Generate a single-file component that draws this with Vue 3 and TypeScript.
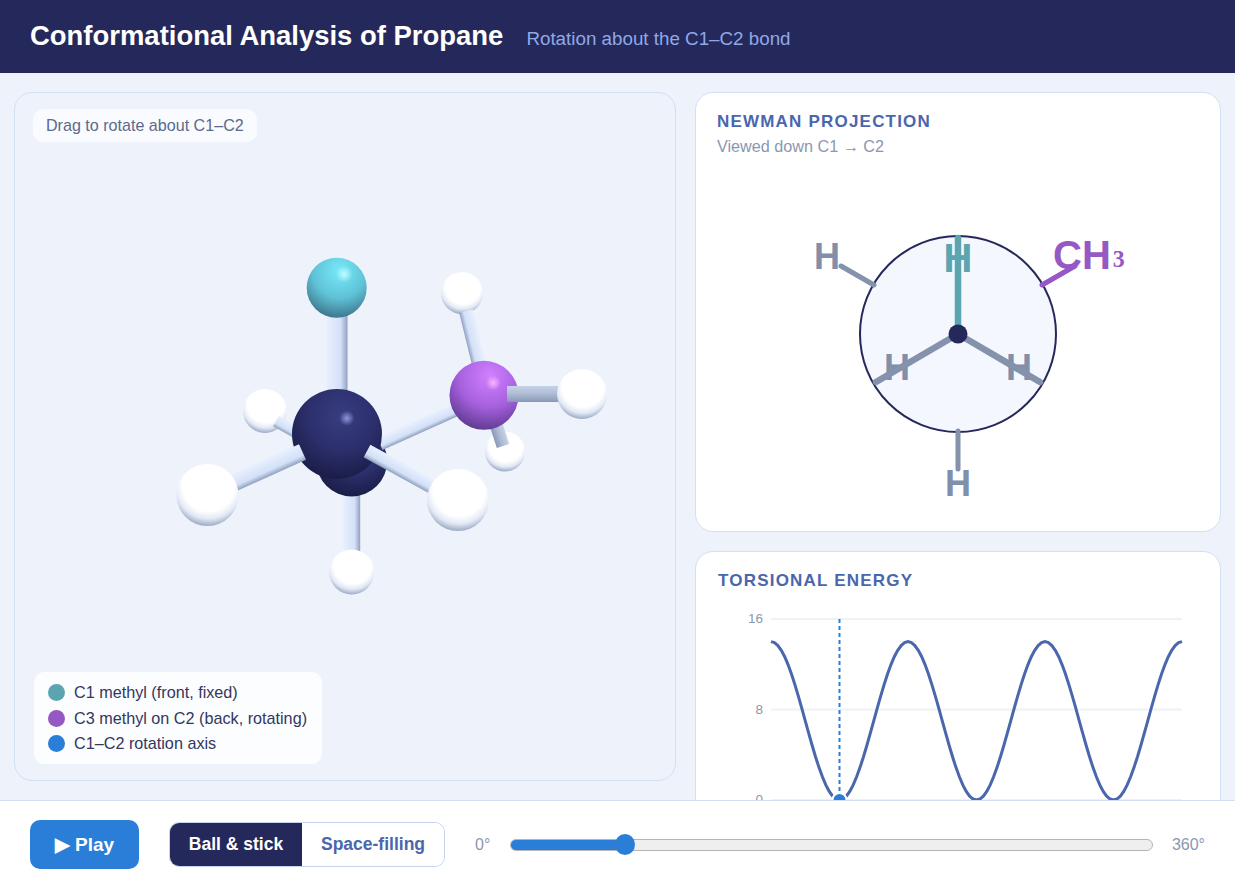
<script setup lang="ts">
import { computed, ref } from 'vue'

type Pt = [number, number]
interface Bond { a: Pt; b: Pt; w: number; id: string; dark?: boolean }
interface Atom { x: number; y: number; r: number; kind: 'h' | 'navy' | 'cyan' | 'purple' }

type Item = { t: 'b'; d: Bond } | { t: 'a'; d: Atom }

const scene: Item[] = [
  { t: 'a', d: { x: 462, y: 293, r: 21, kind: 'h' } },
  { t: 'b', d: { a: [466, 311], b: [480, 368], w: 14, id: 'b1' } },
  { t: 'a', d: { x: 505, y: 451.5, r: 20, kind: 'h' } },
  { t: 'b', d: { a: [494, 418], b: [503, 446], w: 13, id: 'b2', dark: true } },
  { t: 'a', d: { x: 265, y: 411, r: 22, kind: 'h' } },
  { t: 'b', d: { a: [276, 421], b: [310, 440], w: 12, id: 'b3' } },
  { t: 'b', d: { a: [351.7, 480], b: [351.7, 556], w: 17, id: 'b4' } },
  { t: 'a', d: { x: 351.7, y: 572, r: 22.5, kind: 'h' } },
  { t: 'a', d: { x: 351.7, y: 461, r: 35.5, kind: 'navy' } },
  { t: 'b', d: { a: [380, 444], b: [470, 403.5], w: 13, id: 'b5' } },
  { t: 'a', d: { x: 484, y: 395.3, r: 34.5, kind: 'purple' } },
  { t: 'b', d: { a: [507, 394], b: [565, 394], w: 16, id: 'b6', dark: true } },
  { t: 'a', d: { x: 582, y: 394, r: 25, kind: 'h' } },
  { t: 'b', d: { a: [337, 290], b: [337, 420], w: 21, id: 'b7' } },
  { t: 'a', d: { x: 336.7, y: 287.7, r: 30, kind: 'cyan' } },
  { t: 'a', d: { x: 337, y: 434, r: 45, kind: 'navy' } },
  { t: 'b', d: { a: [302.5, 452], b: [225, 487], w: 17, id: 'b8' } },
  { t: 'a', d: { x: 207.5, y: 495, r: 31, kind: 'h' } },
  { t: 'b', d: { a: [367, 451], b: [436, 489], w: 14, id: 'b9' } },
  { t: 'a', d: { x: 458, y: 500, r: 31, kind: 'h' } },
]

function quad(b: Bond): string {
  const dx = b.b[0] - b.a[0]
  const dy = b.b[1] - b.a[1]
  const l = Math.hypot(dx, dy)
  const nx = (-dy / l) * (b.w / 2)
  const ny = (dx / l) * (b.w / 2)
  return [
    [b.a[0] + nx, b.a[1] + ny],
    [b.b[0] + nx, b.b[1] + ny],
    [b.b[0] - nx, b.b[1] - ny],
    [b.a[0] - nx, b.a[1] - ny],
  ].map((p) => p.join(',')).join(' ')
}

function gradEnds(b: Bond) {
  const dx = b.b[0] - b.a[0]
  const dy = b.b[1] - b.a[1]
  const l = Math.hypot(dx, dy)
  let nx = (-dy / l) * (b.w / 2)
  let ny = (dx / l) * (b.w / 2)
  if (ny > 0 || (ny === 0 && nx > 0)) { nx = -nx; ny = -ny }
  return { x1: b.a[0] + nx, y1: b.a[1] + ny, x2: b.a[0] - nx, y2: b.a[1] - ny }
}

const hl: Record<Atom['kind'], { dx: number; dy: number; r: number }> = {
  h: { dx: 0.25, dy: -0.55, r: 0.4 },
  navy: { dx: 0.22, dy: -0.35, r: 0.17 },
  cyan: { dx: 0.25, dy: -0.45, r: 0.28 },
  purple: { dx: 0.27, dy: -0.36, r: 0.22 },
}

const deg = ref(60)
const W = 411
const H = 181
const curve = computed(() => {
  const pts: string[] = []
  for (let a = 0; a <= 360; a += 3) {
    const e = 7 * (1 + Math.cos((3 * a * Math.PI) / 180))
    pts.push(`${((a / 360) * W).toFixed(2)},${(H - (e / 16) * H).toFixed(2)}`)
  }
  return pts.join(' ')
})
const markerX = computed(() => (deg.value / 360) * W)
const markerE = computed(() => 7 * (1 + Math.cos((3 * deg.value * Math.PI) / 180)))
const markerY = computed(() => H - (markerE.value / 16) * H)
const fillPct = computed(() => `${(deg.value / 360) * 100}%`)
</script>

<template>
  <div class="app">
    <header class="top">
      <h1>Conformational Analysis of Propane</h1>
      <span class="sub">Rotation about the C1–C2 bond</span>
    </header>

    <main class="main">
      <section class="stage">
        <div class="hint">Drag to rotate about C1–C2</div>
        <svg class="mol" viewBox="14 92 662 689" width="662" height="689" aria-label="Propane ball and stick model">
          <defs>
            <radialGradient id="g-h" cx="0.52" cy="0.34" r="0.68">
              <stop offset="0" stop-color="#ffffff" />
              <stop offset="0.62" stop-color="#ffffff" />
              <stop offset="0.8" stop-color="#e2e9f5" />
              <stop offset="1" stop-color="#8f9fbc" />
            </radialGradient>
            <radialGradient id="g-navy" cx="0.55" cy="0.3" r="0.75">
              <stop offset="0" stop-color="#383d80" />
              <stop offset="0.5" stop-color="#2c2f6c" />
              <stop offset="1" stop-color="#181a42" />
            </radialGradient>
            <radialGradient id="g-cyan" cx="0.55" cy="0.22" r="0.82">
              <stop offset="0" stop-color="#78e8fa" />
              <stop offset="0.55" stop-color="#5fc2d6" />
              <stop offset="1" stop-color="#3a6f86" />
            </radialGradient>
            <radialGradient id="g-purple" cx="0.58" cy="0.22" r="0.82">
              <stop offset="0" stop-color="#d080ff" />
              <stop offset="0.55" stop-color="#a660de" />
              <stop offset="1" stop-color="#5a388b" />
            </radialGradient>
            <radialGradient id="spec-h"><stop offset="0" stop-color="#fff" /><stop offset="1" stop-color="#fff" stop-opacity="0" /></radialGradient>
            <radialGradient id="spec-navy"><stop offset="0" stop-color="#9094dc" /><stop offset="1" stop-color="#9094dc" stop-opacity="0" /></radialGradient>
            <radialGradient id="spec-cyan"><stop offset="0" stop-color="#c0fbff" /><stop offset="1" stop-color="#c0fbff" stop-opacity="0" /></radialGradient>
            <radialGradient id="spec-purple"><stop offset="0" stop-color="#fab4ff" /><stop offset="1" stop-color="#fab4ff" stop-opacity="0" /></radialGradient>
            <template v-for="it in scene" :key="it.t === 'b' ? it.d.id : `${it.d.x}`">
              <linearGradient v-if="it.t === 'b'" :id="it.d.id" gradientUnits="userSpaceOnUse" v-bind="gradEnds(it.d)">
                <template v-if="it.d.dark">
                  <stop offset="0" stop-color="#c6d2e8" />
                  <stop offset="0.5" stop-color="#aebbd4" />
                  <stop offset="1" stop-color="#8898b4" />
                </template>
                <template v-else>
                  <stop offset="0" stop-color="#e8f0ff" />
                  <stop offset="0.68" stop-color="#d3e0f7" />
                  <stop offset="1" stop-color="#8fa0bf" />
                </template>
              </linearGradient>
            </template>
          </defs>
          <template v-for="(it, i) in scene" :key="i">
            <polygon v-if="it.t === 'b'" :points="quad(it.d)" :fill="`url(#${it.d.id})`" />
            <g v-else>
              <circle :cx="it.d.x" :cy="it.d.y" :r="it.d.r" :fill="`url(#g-${it.d.kind})`" />
              <circle
                :cx="it.d.x + hl[it.d.kind].dx * it.d.r"
                :cy="it.d.y + hl[it.d.kind].dy * it.d.r"
                :r="hl[it.d.kind].r * it.d.r"
                :fill="`url(#spec-${it.d.kind})`"
              />
            </g>
          </template>
        </svg>
        <ul class="legend">
          <li><i class="dot teal"></i>C1 methyl (front, fixed)</li>
          <li><i class="dot violet"></i>C3 methyl on C2 (back, rotating)</li>
          <li><i class="dot blue"></i>C1–C2 rotation axis</li>
        </ul>
      </section>

      <aside class="side">
        <section class="card newman">
          <h2>NEWMAN PROJECTION</h2>
          <p class="note">Viewed down C1 → C2</p>
          <svg class="nsvg" viewBox="695 160 526 372" width="526" height="372" aria-label="Newman projection">
            <circle cx="958" cy="334" r="98" fill="#f4f7fe" stroke="#25285a" stroke-width="2" />
            <g class="lab">
              <text x="814" y="269">H</text>
              <text x="958" y="496" text-anchor="middle">H</text>
              <text x="958" y="272" text-anchor="middle" class="t-teal">H</text>
              <text x="897" y="380" text-anchor="middle">H</text>
              <text x="1019" y="380" text-anchor="middle">H</text>
              <text x="1053" y="269" class="t-vio">CH<tspan class="t-sub" dx="2" dy="-10">₃</tspan></text>
            </g>
            <g stroke-linecap="round" fill="none">
              <line x1="841" y1="266" x2="874" y2="285" stroke="#8492ab" stroke-width="5" />
              <line x1="958" y1="431" x2="958" y2="469" stroke="#8492ab" stroke-width="5" />
              <line x1="1042" y1="285" x2="1075" y2="266" stroke="#9558c4" stroke-width="5" />
              <line x1="958" y1="334" x2="958" y2="238" stroke="#5ba4b0" stroke-width="6.5" />
              <line x1="958" y1="334" x2="876" y2="382" stroke="#8492ab" stroke-width="6.5" />
              <line x1="958" y1="334" x2="1040" y2="382" stroke="#8492ab" stroke-width="6.5" />
            </g>
            <circle cx="958" cy="334" r="9.5" fill="#25285a" />
          </svg>
        </section>

        <section class="card energy">
          <h2>TORSIONAL ENERGY</h2>
          <svg class="esvg" viewBox="-76 -10 526 230" width="526" height="230" aria-label="Torsional energy chart">
            <line x1="0" x2="411" y1="0" y2="0" stroke="#edf1f8" stroke-width="2" />
            <line x1="0" x2="411" y1="90.5" y2="90.5" stroke="#edf1f8" stroke-width="2" />
            <line x1="0" x2="411" y1="181" y2="181" stroke="#edf1f8" stroke-width="2" />
            <text x="-8" y="4" class="tick">16</text>
            <text x="-8" y="94.5" class="tick">8</text>
            <text x="-8" y="185" class="tick">0</text>
            <polyline :points="curve" fill="none" stroke="#4a66ad" stroke-width="3" />
            <line :x1="markerX" :x2="markerX" y1="0" :y2="markerY" stroke="#2b7ed8" stroke-width="2" stroke-dasharray="4 3" />
            <circle :cx="markerX" :cy="markerY" r="7" fill="#2b7ed8" stroke="#fff" stroke-width="2" />
          </svg>
        </section>
      </aside>
    </main>

    <footer class="bar">
      <button class="play" type="button">▶ Play</button>
      <div class="seg">
        <button class="on" type="button">Ball &amp; stick</button>
        <button type="button">Space-filling</button>
      </div>
      <span class="lim">0°</span>
      <input v-model.number="deg" class="range" type="range" min="0" max="360" :style="{ '--fill': fillPct }" />
      <span class="lim">360°</span>
    </footer>
  </div>
</template>

<style>
html, body { margin: 0; padding: 0; overflow: hidden; background: #edf2fb; }
</style>

<style scoped>
.app {
  height: 881px;
  display: flex;
  flex-direction: column;
  font-family: "Liberation Sans", Arial, sans-serif;
  background: #edf2fb;
  overflow: hidden;
}
.top {
  height: 73px;
  flex: none;
  background: #25285a;
  display: flex;
  align-items: center;
  padding: 0 30px 2px;
  gap: 23px;
  box-sizing: border-box;
}
.top h1 { margin: 0; font-size: 27.46px; font-weight: 700; color: #fff; }
.sub { font-size: 18.8px; color: #8fa8e6; padding-top: 6px; }

.main {
  flex: 1;
  min-height: 0;
  display: grid;
  grid-template-columns: 662px 526px;
  gap: 19px;
  padding: 19px 14px 0;
  overflow: hidden;
  box-sizing: border-box;
}
.stage {
  position: relative;
  height: 689px;
  box-sizing: border-box;
  border: 1px solid #d3dff3;
  border-radius: 18px;
  background: #edf2fb;
}
.mol { position: absolute; left: -1px; top: -1px; display: block; }
.hint {
  position: absolute;
  left: 18px;
  top: 16px;
  padding: 7px 13px;
  height: 33px;
  box-sizing: border-box;
  border-radius: 10px;
  background: rgba(255, 255, 255, 0.65);
  font-size: 16.1px;
  line-height: 19px;
  color: #5c6a8c;
}
.legend {
  position: absolute;
  left: 19px;
  bottom: 16px;
  margin: 0;
  padding: 8px 14px;
  list-style: none;
  width: 288px;
  height: 92px;
  box-sizing: border-box;
  border-radius: 10px;
  background: rgba(255, 255, 255, 0.8);
  color: #33375f;
  font-size: 16.2px;
}
.legend li { display: flex; align-items: center; gap: 9px; height: 25.5px; white-space: nowrap; }
.dot { width: 17px; height: 17px; border-radius: 50%; display: block; flex: none; }
.teal { background: #5ba4b0; }
.violet { background: #9558c4; }
.blue { background: #2b7ed8; }

.side { display: flex; flex-direction: column; gap: 19px; min-width: 0; }
.card {
  flex: none;
  background: #fff;
  border: 1px solid #d3dff3;
  border-radius: 18px;
  box-sizing: border-box;
  padding: 20px 0 0 22px;
  position: relative;
}
.newman { height: 440px; padding-left: 21px; }
.energy { height: 340px; }
.card h2 {
  margin: 0;
  font-size: 17px;
  line-height: 18px;
  font-weight: 700;
  letter-spacing: 1.2px;
  color: #4a66ad;
}
.note { margin: 6px 0 0; font-size: 16.2px; line-height: 18px; color: #8a97b0; }
.nsvg { position: absolute; left: -1px; top: 67px; display: block; }
.lab text { font-size: 36px; font-weight: 700; fill: #8090ab; font-family: "Liberation Sans", Arial, sans-serif; }
.lab .t-teal { fill: #5ba4b0; font-size: 40px; }
.lab .t-vio { fill: #9558c4; font-size: 40px; }
.lab .t-sub { font-family: "Liberation Serif", serif; }
.esvg { position: absolute; left: -1px; top: 57px; display: block; }
.tick { font-size: 13.5px; fill: #8a97b0; text-anchor: end; font-family: "Liberation Sans", Arial, sans-serif; }

.bar {
  flex: none;
  height: 81px;
  box-sizing: border-box;
  background: #fff;
  border-top: 1px solid #d3dff3;
  display: flex;
  align-items: center;
  padding: 7px 30px 0;
  position: relative;
  z-index: 2;
}
.play {
  width: 109px;
  height: 49px;
  border: 0;
  border-radius: 10px;
  background: #2b7ed8;
  color: #fff;
  font: 700 19px "Liberation Sans", Arial, sans-serif;
  margin-right: 30px;
}
.seg {
  display: flex;
  width: 276px;
  height: 45px;
  box-sizing: border-box;
  border: 1px solid #c5d3ee;
  border-radius: 10px;
  overflow: hidden;
  margin-right: 30px;
}
.seg button {
  border: 0;
  background: #fff;
  color: #4a66ad;
  font: 700 17.5px "Liberation Sans", Arial, sans-serif;
  padding: 0;
  flex: 1;
}
.seg button.on { background: #25285a; color: #fff; flex: none; width: 132px; }
.lim { font-size: 16px; color: #8a97b0; }
.range {
  appearance: none;
  -webkit-appearance: none;
  flex: 1;
  min-width: 0;
  margin: 0 19px 0 20px;
  height: 22px;
  background: transparent;
}
.range::-webkit-slider-runnable-track {
  height: 12px;
  box-sizing: border-box;
  border-radius: 6px;
  border: 1px solid #b5b5b5;
  background: linear-gradient(to right, #2b7ed8 var(--fill), #efefef var(--fill));
}
.range::-webkit-slider-thumb {
  -webkit-appearance: none;
  width: 20px;
  height: 21px;
  margin-top: -5.5px;
  border-radius: 50%;
  background: #2b7ed8;
}
</style>
